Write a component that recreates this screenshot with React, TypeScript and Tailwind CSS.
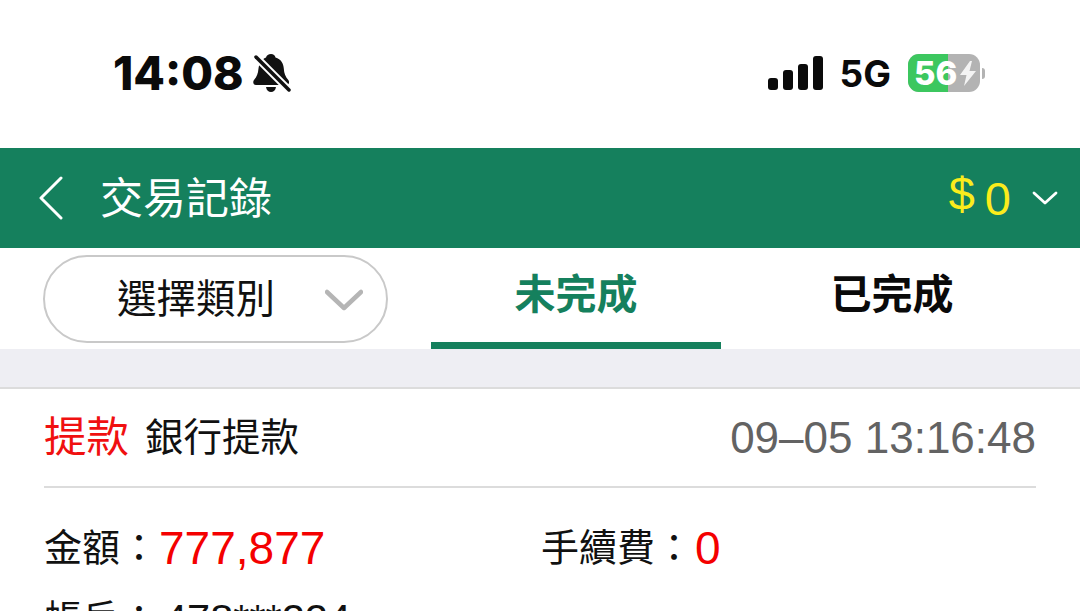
const CJK = "font-['Liberation_Sans','Noto_Sans_CJK_TC',sans-serif]";

function BellOff() {
  return (
    <svg width="39" height="39" viewBox="0 0 39 39" className="shrink-0">
      <path
        d="M19 0c2.500 0 4 1.500 4.500 3.500 5.500 1.500 8 6 8.300 11 .3 5 1.500 8 4.500 11.500 1.500 2 .7 5-2 5H4c-2.700 0-3.500-3-2-5 3-3.500 4-6.500 4.500-11.500.5-5 3-9.500 7.500-11 .5-2 2.500-3.500 5-3.500z"
        fill="#111"
      />
      <path d="M14 33h10c-.5 3.500-2.500 5-5 5s-4.500-1.500-5-5z" fill="#111" />
      <path d="M2 1l36 36" stroke="#fff" strokeWidth="7.5" />
      <path d="M4 3l33 33" stroke="#111" strokeWidth="3.500" strokeLinecap="round" />
    </svg>
  );
}

function Signal() {
  return (
    <div className="mb-[1px] flex items-end gap-[5px]">
      <div className="h-[12px] w-[10px] rounded-[3px] bg-[#0a0a0a]" />
      <div className="h-[20px] w-[10px] rounded-[3px] bg-[#0a0a0a]" />
      <div className="h-[26px] w-[10px] rounded-[3px] bg-[#0a0a0a]" />
      <div className="h-[34px] w-[10px] rounded-[3px] bg-[#0a0a0a]" />
    </div>
  );
}

function Battery() {
  return (
    <div className="flex items-center gap-[2px]">
      <div className="relative flex h-[38px] w-[72px] items-center overflow-hidden rounded-[11px] bg-[#b3b3b3]">
        <div className="absolute inset-y-0 left-0 w-[40px] bg-[#3cc75f]" />
        <span className="relative pl-[6px] font-['Inter',sans-serif] text-[33px] leading-none font-extrabold text-white">
          56
        </span>
        <svg width="16" height="25" viewBox="0 0 16 25" className="relative ml-[3px] shrink-0">
          <path d="M10 0L0 14h6.500L4 25l12-15H9.500L12 0z" fill="#f4f4f4" />
        </svg>
      </div>
      <div className="h-[11px] w-[3px] rounded-r-full bg-[#b3b3b3]" />
    </div>
  );
}

function StatusBar() {
  return (
    <div className="flex h-[148px] items-start justify-between pt-[47px] pr-[95px] pl-[113px]">
      <div className="flex h-[52px] items-center gap-[8px]">
        <span className="font-['Inter',sans-serif] text-[46px] leading-none font-extrabold text-[#0a0a0a]">
          14:08
        </span>
        <BellOff />
      </div>
      <div className="flex h-[52px] items-center">
        <Signal />
        <span className="mx-[17px] font-['Inter',sans-serif] text-[37px] leading-none font-bold text-[#0a0a0a]">
          5G
        </span>
        <Battery />
      </div>
    </div>
  );
}

function Header() {
  return (
    <div className={`flex h-[100px] items-center bg-[#15805d] pr-[22px] pl-[38px] text-white ${CJK}`}>
      <svg width="25" height="44" viewBox="0 0 25 44" className="shrink-0" fill="none">
        <path d="M23 2L3 22l20 20" stroke="#fff" strokeWidth="3" strokeLinecap="round" strokeLinejoin="round" />
      </svg>
      <span className="mt-[2px] ml-[37px] text-[43px] leading-none">交易記錄</span>
      <div className="ml-auto flex items-center text-[#fbec1c]">
        <span className="mb-[9px] text-[47px] leading-none">$</span>
        <span className="ml-[10px] text-[47px] leading-none">0</span>
        <svg width="26" height="14" viewBox="0 0 26 14" className="ml-[21px] shrink-0" fill="none">
          <path d="M2 2l11 10L24 2" stroke="#fff" strokeWidth="2.800" strokeLinecap="round" strokeLinejoin="round" />
        </svg>
      </div>
    </div>
  );
}

function Tabs() {
  return (
    <div className={`flex h-[101px] bg-white pt-[7px] ${CJK}`}>
      <div className="ml-[43px] flex h-[88px] w-[345px] items-center rounded-[44px] border-2 border-[#c9c9c9] pr-[23px] pl-[72px]">
        <span className="mt-[2px] text-[39.5px] leading-none text-[#111]">選擇類別</span>
        <svg width="38" height="22" viewBox="0 0 38 22" className="mt-[1px] ml-auto shrink-0" fill="none">
          <path d="M2 3l17 16L36 3" stroke="#b5b5b5" strokeWidth="4.500" strokeLinecap="round" strokeLinejoin="round" />
        </svg>
      </div>
      <div className="ml-[43px] flex h-[94px] w-[290px] items-center justify-center border-b-[7px] border-[#15805d] pb-[6px] text-[41px] leading-none font-bold text-[#15805d]">
        未完成
      </div>
      <div className="ml-[26px] flex h-[94px] w-[290px] items-center justify-center pb-[13px] text-[41px] leading-none font-bold text-[#0a0a0a]">
        已完成
      </div>
    </div>
  );
}

function Record() {
  return (
    <div className={`bg-white px-[44px] ${CJK}`}>
      <div className="flex h-[99px] items-center border-b-2 border-[#dcdcdc] pt-[2px]">
        <span className="text-[42.500px] leading-none text-[#f01010]">提款</span>
        <span className="ml-[16px] text-[38.500px] leading-none text-[#111]">銀行提款</span>
        <span className="mb-[2px] ml-auto text-[44px] leading-none text-[#636363]">09–05 13:16:48</span>
      </div>
      <div className="flex items-center pt-[36px] pb-[26px]">
        <div className="flex h-[48px] w-[497px] items-center">
          <span className="text-[38px] leading-none text-[#111]">金額：</span>
          <span className="ml-[1px] text-[46px] leading-none text-[#f40000]">777,877</span>
        </div>
        <span className="text-[38px] leading-none text-[#111]">手續費：</span>
        <span className="ml-[2px] text-[46px] leading-none text-[#f40000]">0</span>
      </div>
      <div className="flex items-center">
        <span className="text-[38px] leading-none text-[#111]">帳戶：</span>
        <span className="ml-[6px] text-[41.500px] leading-none text-[#111]">478***224</span>
      </div>
    </div>
  );
}

export default function App() {
  return (
    <div className="h-[611px] w-[1080px] overflow-hidden bg-white">
      <StatusBar />
      <Header />
      <Tabs />
      <div className="h-[40px] border-b-2 border-[#dcdcdc] bg-[#eeeef3]" />
      <Record />
    </div>
  );
}
